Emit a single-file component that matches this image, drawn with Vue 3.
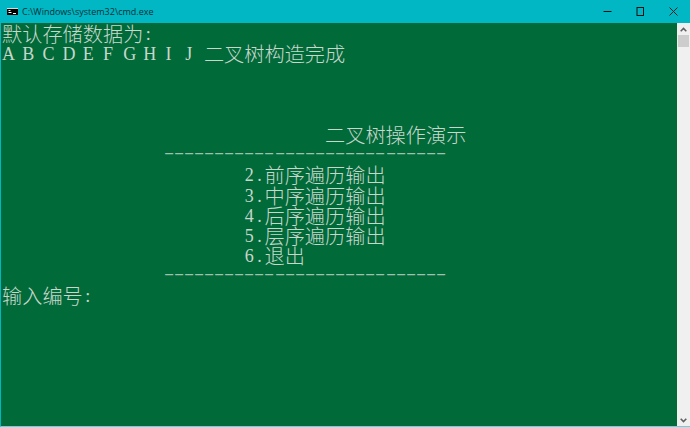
<script setup>
// 控制台内容，每行一个字符串，空格按等宽单元占位
const lines = [
  '默认存储数据为:',
  'A B C D E F G H I J 二叉树构造完成',
  '',
  '',
  '',
  '                                二叉树操作演示',
  '                ----------------------------',
  '                        2.前序遍历输出',
  '                        3.中序遍历输出',
  '                        4.后序遍历输出',
  '                        5.层序遍历输出',
  '                        6.退出',
  '                ----------------------------',
  '输入编号:'
]

// 拆成中文段和半角单元
function cells(line) {
  return line.match(/[\u4e00-\u9fa5]+|[^\u4e00-\u9fa5]/g) || []
}
function cellClass(part) {
  if (/[\u4e00-\u9fa5]/.test(part)) return 'wide'
  return part === '-' ? 'cell dash' : 'cell'
}
</script>

<template>
  <div class="window">
    <div class="titlebar">
      <svg class="app-icon" width="11" height="7" viewBox="0 0 11 7">
        <rect width="11" height="7" fill="#000" />
        <rect width="11" height="1" fill="#d8d8d8" />
        <path d="M1.5 2.5h2M1.5 4.5h3M6 5.5h3" stroke="#fff" stroke-width="1" fill="none" />
      </svg>
      <span class="title">C:\Windows\system32\cmd.exe</span>
      <div class="controls">
        <div class="ctrl">
          <svg width="9" height="9" viewBox="0 0 9 9"><path d="M0.5 4.5h8" stroke="#111" stroke-width="1" /></svg>
        </div>
        <div class="ctrl">
          <svg width="9" height="9" viewBox="0 0 9 9"><rect x="1" y="0.5" width="6.5" height="8" stroke="#111" fill="none" /></svg>
        </div>
        <div class="ctrl">
          <svg width="9" height="9" viewBox="0 0 9 9"><path d="M0.5 0.5l8 8M8.5 0.5l-8 8" stroke="#222" stroke-width="1" fill="none" /></svg>
        </div>
      </div>
    </div>
    <div class="body">
      <div class="console">
        <div v-for="(line, i) in lines" :key="i" class="line">
          <span
            v-for="(part, j) in cells(line)"
            :key="j"
            :class="cellClass(part)"
          >{{ part }}</span>
        </div>
      </div>
      <div class="scrollbar">
        <div class="arrow">
          <svg width="7" height="5" viewBox="0 0 7 5"><path d="M0.7 4.3L3.5 1.5l2.8 2.8" stroke="#606060" stroke-width="1.6" fill="none" /></svg>
        </div>
        <div class="thumb"></div>
        <div class="track"></div>
        <div class="arrow">
          <svg width="7" height="5" viewBox="0 0 7 5"><path d="M0.7 0.7L3.5 3.5l2.8-2.8" stroke="#606060" stroke-width="1.6" fill="none" /></svg>
        </div>
      </div>
    </div>
  </div>
</template>

<style scoped>
.window {
  width: 690px;
  height: 427px;
  box-sizing: border-box;
  display: flex;
  flex-direction: column;
  border-left: 1px solid #00b7c3;
  border-bottom: 1px solid #5fd6e0;
  background: #00b7c3;
  overflow: hidden;
}

.titlebar {
  height: 23px;
  flex: none;
  display: flex;
  align-items: center;
  padding-left: 6px;
}

.app-icon {
  flex: none;
}

.title {
  margin-left: 4px;
  font-family: "Open Sans", sans-serif;
  font-size: 9px;
  color: #0a3038;
}

.controls {
  margin-left: auto;
  display: flex;
}

.ctrl {
  width: 33px;
  height: 23px;
  display: flex;
  align-items: center;
  justify-content: center;
}

.body {
  flex: 1;
  display: grid;
  grid-template-columns: 1fr 13px;
  min-height: 0;
}

.console {
  background: #006a39;
  color: #c8d6cc;
  padding: 1px 0 0 1px;
}

.line {
  height: 20.2px;
  line-height: 20.2px;
  white-space: pre;
  display: flex;
}

.cell {
  flex: none;
  width: 10.1px;
  text-align: center;
  font-family: "Liberation Serif", serif;
  font-size: 18px;
}

.dash {
  transform: translateY(-3px) scaleX(1.7);
  opacity: 0.8;
}

.wide {
  flex: none;
  font-family: "Noto Sans CJK SC", sans-serif;
  font-weight: 300;
  font-size: 20.2px;
}

.scrollbar {
  background: #f0f0f0;
  display: flex;
  flex-direction: column;
  min-height: 0;
}

.arrow {
  height: 12px;
  flex: none;
  display: flex;
  align-items: center;
  justify-content: center;
}

.thumb {
  height: 12px;
  flex: none;
  margin-left: 1px;
  margin-right: 1px;
  background: #cdcdcd;
}

.track {
  flex: 1;
}
</style>
